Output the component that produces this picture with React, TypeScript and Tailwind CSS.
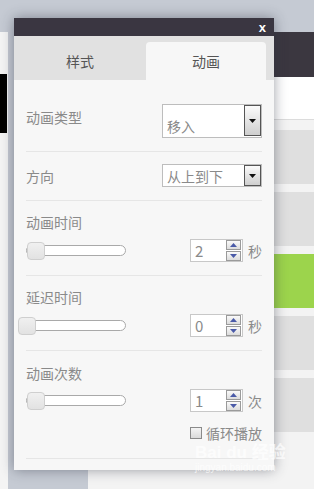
import React from "react";

const font = { fontFamily: '"Noto Sans CJK SC", "Noto Sans", sans-serif' };

function Select({ value, tall }: { value: string; tall?: boolean }) {
  return (
    <div
      className={`w-[100px] ${tall ? "h-[34px] items-end pb-[1px]" : "h-[23px] items-center"} flex border border-[#bdbdbd] bg-white pl-[4px] relative`}
    >
      <span className="flex-1 text-[14px] leading-[20px] text-[#8a8a8a]">{value}</span>
      <div className="self-stretch my-0 mr-0 w-[17px] border border-[#555] bg-gradient-to-b from-[#fbfbfb] to-[#cfcfcf] flex items-center justify-center">
        <svg width="7" height="4" viewBox="0 0 7 4">
          <path d="M0 0H7L3.5 4Z" fill="#111" />
        </svg>
      </div>
    </div>
  );
}

function Slider({ thumb }: { thumb: number }) {
  return (
    <div className="relative w-[100px] h-[18px] flex items-center">
      <div className="w-full h-[11px] rounded-full border border-[#a9a9a9] bg-white" />
      <div
        className="absolute top-0 w-[18px] h-[18px] rounded-[4px] border border-[#cfcfcf] bg-gradient-to-b from-[#f0f0f0] to-[#e2e2e2]"
        style={{ left: thumb }}
      />
    </div>
  );
}

function Spinner({ value, unit }: { value: string; unit: string }) {
  return (
    <div className="flex items-center">
      <div className="w-[53px] h-[23px] border border-[#c8c8c8] bg-white flex items-center pl-[4px] pr-[1px]">
        <span className="flex-1 text-[15px] leading-[20px] text-[#8a8a8a]">{value}</span>
        <div className="flex flex-col gap-[1px]">
          {["M0 4L3.5 0L7 4Z", "M0 0H7L3.5 4Z"].map((d, i) => (
            <div
              key={i}
              className="w-[15px] h-[10px] border border-[#9a9a9a] bg-gradient-to-b from-[#fafafa] to-[#dcdcdc] flex items-center justify-center"
            >
              <svg width="7" height="4" viewBox="0 0 7 4">
                <path d={d} fill="#4a5aa8" />
              </svg>
            </div>
          ))}
        </div>
      </div>
      <span className="ml-[5px] w-[14px] text-[14px] leading-[20px] text-[#8a8a8a]">{unit}</span>
    </div>
  );
}

function Label({ children }: { children: React.ReactNode }) {
  return <div className="text-[14px] leading-[20px] text-[#8a8a8a]">{children}</div>;
}

export default function App() {
  const blocks = ["bg-[#dfdfdf]", "bg-[#dfdfdf]", "bg-[#9cd44c]", "bg-[#dfdfdf]", "bg-[#dfdfdf]"];

  return (
    <div className="relative w-[314px] h-[489px] overflow-hidden bg-[#c5cad3]" style={font}>
      {/* page behind the dialog */}
      <div className="h-[32px]" />
      <div className="flex h-[457px]">
        <div className="w-[8px] bg-[#f4f4f4]">
          <div className="mt-[42px] h-[59px] w-[7px] bg-black" />
        </div>
        <div className="w-[80px]" />
        <div className="flex-1 flex flex-col bg-[#f3f3f3]">
          <div className="h-[45px] bg-[#3b3740]" />
          <div className="h-[43px] bg-white border-b border-[#dcdcdc]" />
          <div className="flex flex-col gap-[8px] pt-[10px]">
            {blocks.map((b, i) => (
              <div key={i} className={`h-[54px] ${b}`} />
            ))}
          </div>
        </div>
      </div>

      {/* dialog */}
      <div className="absolute left-[14px] top-[18px] w-[260px] h-[452px] bg-[#f7f7f7] shadow-[0_0_12px_rgba(40,45,60,0.45)] flex flex-col">
        <div className="h-[18px] bg-[#3a3641] flex items-center justify-end pr-[8px]">
          <span className="text-white font-bold text-[13px] leading-none" style={{ fontFamily: '"Liberation Sans", sans-serif' }}>
            x
          </span>
        </div>
        <div className="h-[44px] bg-[#e1e1e1] flex items-end pr-[8px]">
          <div className="w-[132px] h-[38px] flex items-center justify-center text-[14px] text-[#555]">样式</div>
          <div className="w-[120px] h-[38px] rounded-t-[4px] bg-[#f7f7f7] flex items-center justify-center text-[14px] text-[#555]">
            动画
          </div>
        </div>

        <div className="px-[12px]">
          <div className="pt-[24px] pb-[13px] flex items-start justify-between border-b border-[#e6e6e6]">
            <div className="mt-[3px]">
              <Label>动画类型</Label>
            </div>
            <Select value="移入" tall />
          </div>
          <div className="pt-[12px] pb-[13px] flex items-center justify-between border-b border-[#e6e6e6]">
            <Label>方向</Label>
            <Select value="从上到下" />
          </div>
          <div className="pt-[11px] pb-[13px] border-b border-[#e6e6e6]">
            <Label>动画时间</Label>
            <div className="mt-[7px] flex items-center justify-between">
              <Slider thumb={1} />
              <Spinner value="2" unit="秒" />
            </div>
          </div>
          <div className="pt-[11px] pb-[13px] border-b border-[#e6e6e6]">
            <Label>延迟时间</Label>
            <div className="mt-[7px] flex items-center justify-between">
              <Slider thumb={-8} />
              <Spinner value="0" unit="秒" />
            </div>
          </div>
          <div className="pt-[12px] pb-[17px] border-b border-[#e6e6e6]">
            <Label>动画次数</Label>
            <div className="mt-[6px] flex items-center justify-between">
              <Slider thumb={1} />
              <Spinner value="1" unit="次" />
            </div>
            <div className="mt-[13px] h-[16px] flex items-center justify-end gap-[4px]">
              <div className="w-[12px] h-[12px] border border-[#8a8a8a] bg-gradient-to-b from-[#f4f4f4] to-[#dadada]" />
              <span className="text-[14px] leading-[16px] text-[#8a8a8a]">循环播放</span>
            </div>
          </div>
        </div>
      </div>

      {/* watermark */}
      <div className="absolute left-[195px] top-[443px] flex flex-col items-start text-white/70 pointer-events-none">
        <span className="text-[17px] leading-[19px] font-bold" style={{ fontFamily: '"Liberation Sans", "Noto Sans CJK SC", sans-serif' }}>
          Bai du 经验
        </span>
        <span className="text-[10px] leading-[12px]" style={{ fontFamily: '"Liberation Sans", sans-serif' }}>
          jingyan.baidu.com
        </span>
      </div>
    </div>
  );
}
